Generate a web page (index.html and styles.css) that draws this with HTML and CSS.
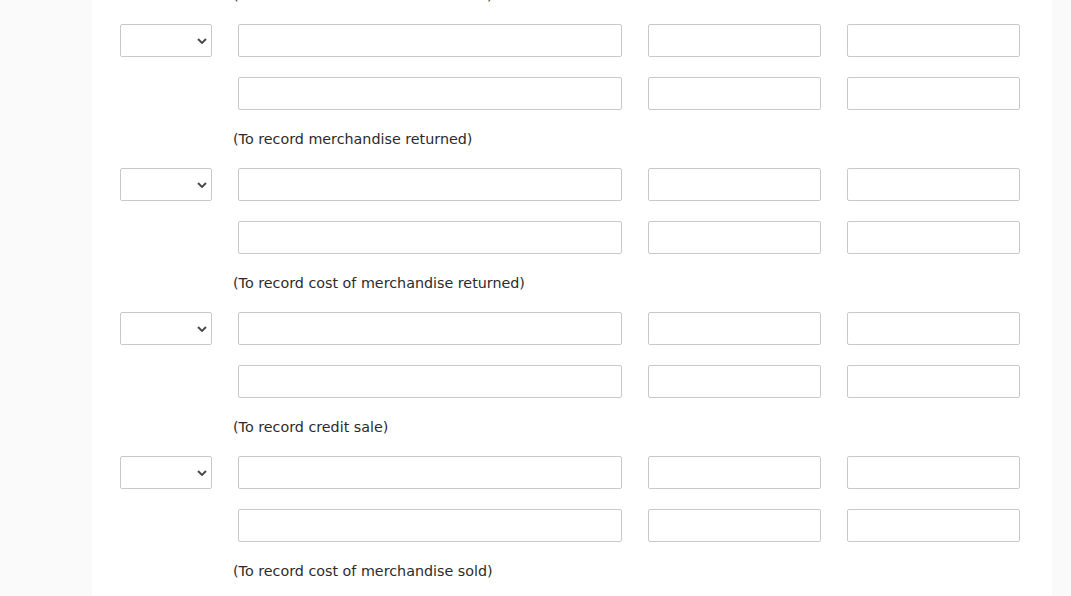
FILE: index.html
```html
<!DOCTYPE html>
<html>
<head>
<meta charset="utf-8">
<link rel="stylesheet" href="styles.css">
</head>
<body>
<div class="panel">
  <div class="note note-top">(To record cost of merchandise sold)</div>

  <div class="entry">
    <div class="sel"><select class="select"><option></option></select><svg class="chev" viewBox="0 0 10 6" width="10" height="6"><path d="M1 1l4 4 4-4" fill="none" stroke="#444" stroke-width="1.8"/></svg></div>
    <input class="field wide" type="text"><input class="field" type="text"><input class="field" type="text">
    <div></div>
    <input class="field wide" type="text"><input class="field" type="text"><input class="field" type="text">
  </div>
  <div class="note">(To record merchandise returned)</div>

  <div class="entry">
    <div class="sel"><select class="select"><option></option></select><svg class="chev" viewBox="0 0 10 6" width="10" height="6"><path d="M1 1l4 4 4-4" fill="none" stroke="#444" stroke-width="1.8"/></svg></div>
    <input class="field wide" type="text"><input class="field" type="text"><input class="field" type="text">
    <div></div>
    <input class="field wide" type="text"><input class="field" type="text"><input class="field" type="text">
  </div>
  <div class="note">(To record cost of merchandise returned)</div>

  <div class="entry">
    <div class="sel"><select class="select"><option></option></select><svg class="chev" viewBox="0 0 10 6" width="10" height="6"><path d="M1 1l4 4 4-4" fill="none" stroke="#444" stroke-width="1.8"/></svg></div>
    <input class="field wide" type="text"><input class="field" type="text"><input class="field" type="text">
    <div></div>
    <input class="field wide" type="text"><input class="field" type="text"><input class="field" type="text">
  </div>
  <div class="note">(To record credit sale)</div>

  <div class="entry">
    <div class="sel"><select class="select"><option></option></select><svg class="chev" viewBox="0 0 10 6" width="10" height="6"><path d="M1 1l4 4 4-4" fill="none" stroke="#444" stroke-width="1.8"/></svg></div>
    <input class="field wide" type="text"><input class="field" type="text"><input class="field" type="text">
    <div></div>
    <input class="field wide" type="text"><input class="field" type="text"><input class="field" type="text">
  </div>
  <div class="note">(To record cost of merchandise sold)</div>
</div>
</body>
</html>
```
FILE: styles.css
```css
html, body {
  margin: 0;
  padding: 0;
  background: #fafafa;
  overflow: hidden;
}
.panel {
  margin-left: 92px;
  width: 960px;
  box-sizing: border-box;
  padding: 0 32px 40px 28px;
  background: #ffffff;
  min-height: 700px;
  font-family: "DejaVu Sans", sans-serif;
  color: #2b2b2b;
}
.entry {
  display: grid;
  grid-template-columns: 92px 384px 173px 173px;
  column-gap: 26px;
  row-gap: 20px;
}
.sel {
  position: relative;
  height: 33px;
}
.select {
  appearance: none;
  -webkit-appearance: none;
  display: block;
  width: 92px;
  height: 33px;
  margin: 0;
  border: 1px solid #c9c9c9;
  border-radius: 2px;
  background: #fff;
  box-sizing: border-box;
}
.chev {
  position: absolute;
  right: 5px;
  top: 14px;
  pointer-events: none;
}
.field {
  display: block;
  width: 100%;
  height: 33px;
  margin: 0;
  padding: 0;
  border: 1px solid #c9c9c9;
  border-radius: 2px;
  background: #fff;
  box-sizing: border-box;
}
.note {
  margin-left: 113px;
  box-sizing: border-box;
  height: 58px;
  padding-top: 1px;
  line-height: 57px;
  font-size: 14.3px;
  white-space: nowrap;
}
.note-top {
  margin-top: -34px;
}
```
